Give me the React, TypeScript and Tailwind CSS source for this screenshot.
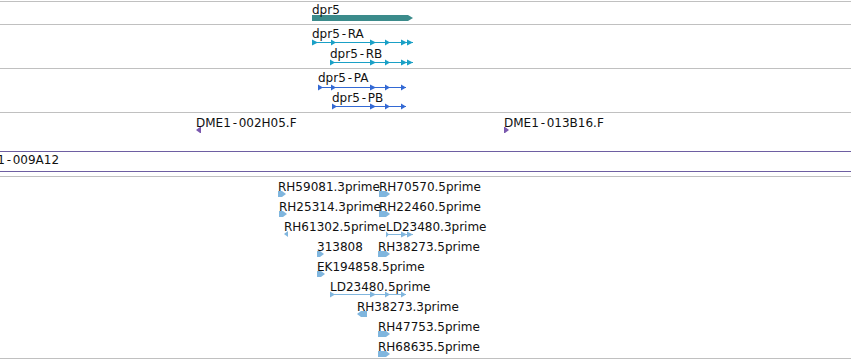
import React from 'react';

type Arrow = [number, number];

type Glyph =
  | { kind: 'bar'; x0: number; x1: number; y: number; color: string }
  | { kind: 'tx'; x0: number; x1: number; y: number; arrows: Arrow[]; color: string }
  | { kind: 'est'; x0: number; x1: number; y: number; dir: 1 | -1; color: string };

interface Label {
  text: string;
  x: number;
  y: number;
}

interface TrackData {
  top: number;
  height: number;
  labels: Label[];
  glyphs: Glyph[];
}

const TEAL = '#3b8b8b';
const CYAN = '#1aa0c6';
const BLUE = '#3369d4';
const PURPLE = '#7a58ae';
const EST = '#80b6de';

// every coordinate below is in page pixels, the track subtracts its own top
const geneTrack: TrackData = {
  top: 2,
  height: 22,
  labels: [{ text: 'dpr5', x: 312, y: 3 }],
  glyphs: [{ kind: 'bar', x0: 312, x1: 413, y: 18, color: TEAL }],
};

const transcriptTrack: TrackData = {
  top: 25,
  height: 43,
  labels: [
    { text: 'dpr5-RA', x: 312, y: 27 },
    { text: 'dpr5-RB', x: 330, y: 47 },
  ],
  glyphs: [
    {
      kind: 'tx', x0: 312, x1: 413, y: 42, color: CYAN,
      arrows: [[312, 6], [331, 5], [370, 6], [385, 5], [401, 6], [407, 6]],
    },
    {
      kind: 'tx', x0: 330, x1: 413, y: 62, color: CYAN,
      arrows: [[330, 5], [370, 6], [385, 5], [401, 6], [407, 6]],
    },
  ],
};

const proteinTrack: TrackData = {
  top: 69,
  height: 43,
  labels: [
    { text: 'dpr5-PA', x: 318, y: 71 },
    { text: 'dpr5-PB', x: 332, y: 91 },
  ],
  glyphs: [
    {
      kind: 'tx', x0: 318, x1: 406, y: 87, color: BLUE,
      arrows: [[318, 5], [331, 5], [370, 6], [385, 5], [401, 5]],
    },
    {
      kind: 'tx', x0: 332, x1: 406, y: 106, color: BLUE,
      arrows: [[332, 5], [370, 6], [385, 5], [401, 5]],
    },
  ],
};

const bacTrack: TrackData = {
  top: 113,
  height: 38,
  labels: [
    { text: 'DME1-002H05.F', x: 196, y: 116 },
    { text: 'DME1-013B16.F', x: 504, y: 116 },
  ],
  glyphs: [
    { kind: 'est', x0: 196, x1: 201, y: 130, dir: -1, color: PURPLE },
    { kind: 'est', x0: 504, x1: 509, y: 130, dir: 1, color: PURPLE },
  ],
};

const estRows: { text: string; x: number; x1: number; dir: 1 | -1; row: number }[] = [
  { text: 'RH59081.3prime', x: 278, x1: 286, dir: 1, row: 0 },
  { text: 'RH70570.5prime', x: 379, x1: 390, dir: 1, row: 0 },
  { text: 'RH25314.3prime', x: 279, x1: 287, dir: 1, row: 1 },
  { text: 'RH22460.5prime', x: 379, x1: 390, dir: 1, row: 1 },
  { text: 'RH61302.5prime', x: 284, x1: 288, dir: -1, row: 2 },
  { text: '313808', x: 317, x1: 324, dir: 1, row: 3 },
  { text: 'RH38273.5prime', x: 378, x1: 390, dir: 1, row: 3 },
  { text: 'EK194858.5prime', x: 317, x1: 325, dir: 1, row: 4 },
  { text: 'RH38273.3prime', x: 357, x1: 367, dir: -1, row: 6 },
  { text: 'RH47753.5prime', x: 378, x1: 390, dir: 1, row: 7 },
  { text: 'RH68635.5prime', x: 378, x1: 390, dir: 1, row: 8 },
];

const estTrack: TrackData = {
  top: 177,
  height: 181,
  labels: [
    ...estRows.map((r) => ({ text: r.text, x: r.x, y: 180 + r.row * 20 })),
    { text: 'LD23480.3prime', x: 386, y: 220 },
    { text: 'LD23480.5prime', x: 330, y: 280 },
  ],
  glyphs: [
    ...estRows.map(
      (r): Glyph => ({ kind: 'est', x0: r.x, x1: r.x1, y: 194 + r.row * 20, dir: r.dir, color: EST })
    ),
    {
      kind: 'tx', x0: 386, x1: 413, y: 234, color: EST,
      arrows: [[386, 3], [401, 6], [407, 6]],
    },
    {
      kind: 'tx', x0: 330, x1: 406, y: 294, color: EST,
      arrows: [[330, 5], [370, 6], [385, 5], [401, 5]],
    },
  ],
};

function Name({ text }: { text: string }) {
  const parts = text.split('-');
  return (
    <>
      {parts.map((p, i) => (
        <React.Fragment key={i}>
          {i > 0 && <span className="pl-[2px] pr-[1.5px]">-</span>}
          {p}
        </React.Fragment>
      ))}
    </>
  );
}

function GlyphShape({ g, top }: { g: Glyph; top: number }) {
  const y = g.y - top;
  if (g.kind === 'bar') {
    const tip = Math.min(5, g.x1 - g.x0);
    return (
      <polygon
        points={`${g.x0},${y - 3} ${g.x1 - tip},${y - 3} ${g.x1},${y} ${g.x1 - tip},${y + 3} ${g.x0},${y + 3}`}
        fill={g.color}
      />
    );
  }
  if (g.kind === 'tx') {
    const ly = y + 0.5;
    return (
      <g fill={g.color}>
        <rect x={g.x0} y={y} width={g.x1 - g.x0} height={1} />
        {g.arrows.map(([ax, w], i) => (
          <polygon key={i} points={`${ax},${ly - 3} ${ax + w},${ly} ${ax},${ly + 3}`} />
        ))}
      </g>
    );
  }
  const w = g.x1 - g.x0;
  const tip = Math.min(4, w);
  const t = y - 3;
  const b = y + 3;
  const pts =
    g.dir === 1
      ? `${g.x0},${t} ${g.x1 - tip},${t} ${g.x1},${y} ${g.x1 - tip},${b} ${g.x0},${b}`
      : `${g.x1},${t} ${g.x0 + tip},${t} ${g.x0},${y} ${g.x0 + tip},${b} ${g.x1},${b}`;
  return <polygon points={pts} fill={g.color} />;
}

function Track({ data }: { data: TrackData }) {
  return (
    <div className="relative w-full" style={{ height: data.height }}>
      <svg className="absolute left-0 top-0" width={851} height={data.height}>
        {data.glyphs.map((g, i) => (
          <GlyphShape key={i} g={g} top={data.top} />
        ))}
      </svg>
      {data.labels.map((l, i) => (
        <div
          key={i}
          className="absolute whitespace-nowrap"
          style={{ left: l.x, top: l.y - data.top }}
        >
          <Name text={l.text} />
        </div>
      ))}
    </div>
  );
}

export default function App() {
  return (
    <div className="w-[851px] h-[360px] overflow-hidden bg-white text-[12px] leading-[14px] text-[#111] font-['DejaVu_Sans',sans-serif]">
      <div className="h-[1px]" />
      <div className="border-t border-[#c0c0c0]">
        <Track data={geneTrack} />
      </div>
      <div className="border-t border-[#c0c0c0]">
        <Track data={transcriptTrack} />
      </div>
      <div className="border-t border-[#c0c0c0]">
        <Track data={proteinTrack} />
      </div>
      <div className="border-t border-[#c0c0c0]">
        <Track data={bacTrack} />
      </div>
      <div className="relative h-[21px] border-y border-[#6e5fa2]">
        <div className="absolute left-[-30px] top-[1px] whitespace-nowrap">
          <Name text="DME1-009A12" />
        </div>
      </div>
      <div className="h-[4px]" />
      <div className="border-y border-[#c0c0c0]">
        <Track data={estTrack} />
      </div>
    </div>
  );
}
